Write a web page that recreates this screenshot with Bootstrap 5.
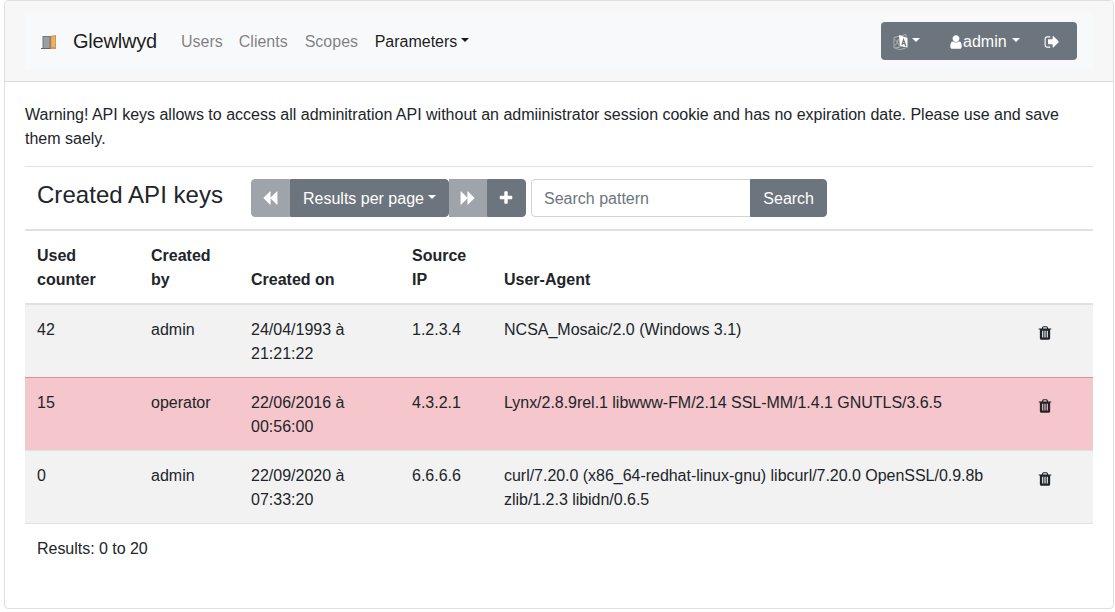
<!DOCTYPE html>
<html lang="en">
<head>
<meta charset="utf-8">
<meta name="viewport" content="width=device-width, initial-scale=1">
<title>Glewlwyd</title>
<link rel="stylesheet" href="https://cdn.jsdelivr.net/npm/bootstrap@5.3.0/dist/css/bootstrap.min.css">
<style>
body{font-family:"Liberation Sans",Arial,sans-serif;color:#212529;overflow:hidden}
.panel{margin-left:4px;width:1110px;height:609px;border:1px solid #dfdfdf;border-radius:4px}
.panel>.card-header{padding:12px 20px;background:#f7f7f7;border-bottom:1px solid #d9d9d9;height:81px}
.panel>.card-body{padding:21px 20px 20px}
.warn{margin-bottom:15px;letter-spacing:-.005px}
.topnav{background:#f8f9fa;height:56px;padding:8px 16px}
.topnav .navbar-brand{font-size:20px;margin-right:16px;color:rgba(0,0,0,.9);padding:4px 0;letter-spacing:-.2px}
.topnav .nav-link{padding:9px 8px 7px;color:rgba(0,0,0,.5)}
.topnav .nav-link.active{color:rgba(0,0,0,.9);margin-left:.6px}
.topnav .scopes{margin-left:1px}
.dropdown-toggle::after{margin-left:4.08px;vertical-align:5px;border-top-width:4.8px;border-left-width:4.8px;border-right-width:4.8px}
.door{width:16px;height:16px;margin-right:16px;position:relative;top:1px}
.btn{border-radius:4px;white-space:nowrap;padding:7px 12px 5px}
.btn-secondary{--bs-btn-bg:#6c757d;--bs-btn-border-color:#6c757d}
.ico{height:16px;width:16px;fill:currentColor;display:inline-block;vertical-align:-2px}
.tools{width:196px;height:38px;background:#6c757d;border-radius:4px;color:#fff}
.tools .btn{border:0;border-radius:0;color:#fff;padding:7px 0 5px;line-height:26px;height:38px}
.tools .dropdown-toggle::after{margin-bottom:4px}
.tools .lang-btn{margin-left:12px}
.tools .lang-btn::after{margin-left:3px}
.tools .user-btn{margin-left:28px}
.tools .user-btn span{margin-left:-1px}
.tools .user-btn::after{margin-left:5px}
.tools .out-btn{margin-left:24px}
.tools .out-btn .ico{vertical-align:-3px}
.keys{table-layout:fixed;width:1068px;border-collapse:collapse;margin:0}
.keys td,.keys th{padding:13px 12px 11px;vertical-align:top;border:0;border-top:1px solid #dee2e6;background:none;box-shadow:none;color:#212529}
.keys thead th{vertical-align:bottom;border-bottom:2px solid #dee2e6}
.keys thead td{border-bottom:2px solid #dee2e6;padding:12px}
.keys tbody .odd-row td{background:#f2f2f2}
.keys tbody .expired td{background:#f5c6cb;border-top-color:#dc8f96}
.keys h4{font-size:24px;line-height:28.8px;font-weight:500;margin:2px 0 0;letter-spacing:.04px}
.keys td.act{padding-left:17.4px;padding-top:17px;padding-bottom:0}
.keys .agent{letter-spacing:-.03px}
.pager .btn.btn{height:38px;flex:none;padding-left:0;padding-right:0;width:39px;margin-left:0!important}
.pager .btn.per-page{width:159px}
.pager .btn.forward{width:38px}
.pager .ico{position:relative;left:-.5px}
.forward .ico{transform:scaleX(-1)}
.btn.off{opacity:.65}
.search{width:296px;margin-left:5px}
.search .form-control{border-color:#ced4da;border-radius:4px;height:38px;padding:7px 12px 5px}
.search .form-control::placeholder{color:#6c757d}
</style>
</head>
<body>
<svg class="d-none">
<symbol id="back" viewBox="0 0 1792 1792"><path d="M1683 141q19-19 32-13t13 32v1472q0 26-13 32t-32-13L973 941q-9-9-13-19v710q0 26-13 32t-32-13L205 941q-19-19-19-45t19-45L915 141q19-19 32-13t13 32v710q4-10 13-19z"/></symbol>
<symbol id="plus" viewBox="0 0 1792 1792"><path d="M1600 736v192q0 40-28 68t-68 28h-416v416q0 40-28 68t-68 28H800q-40 0-68-28t-28-68v-416H288q-40 0-68-28t-28-68V736q0-40 28-68t68-28h416V224q0-40 28-68t68-28h192q40 0 68 28t28 68v416h416q40 0 68 28t28 68z"/></symbol>
<symbol id="trash" viewBox="0 0 1792 1792"><path d="M704 1376V672q0-14-9-23t-23-9h-64q-14 0-23 9t-9 23v704q0 14 9 23t23 9h64q14 0 23-9t9-23zm256 0V672q0-14-9-23t-23-9h-64q-14 0-23 9t-9 23v704q0 14 9 23t23 9h64q14 0 23-9t9-23zm256 0V672q0-14-9-23t-23-9h-64q-14 0-23 9t-9 23v704q0 14 9 23t23 9h64q14 0 23-9t9-23zM672 384h448l-48-117q-7-9-17-11H738q-10 2-17 11zm928 32v64q0 14-9 23t-23 9h-96v948q0 83-47 143.500t-113 60.500H480q-66 0-113-58.500T320 1464V512h-96q-14 0-23-9t-9-23v-64q0-14 9-23t23-9h309l70-167q15-37 54-63t79-26h320q40 0 79 26t54 63l70 167h309q14 0 23 9t9 23z"/></symbol>
<symbol id="user" viewBox="0 0 1792 1792"><path d="M1536 1399q0 109-62.500 187t-150.500 78H469q-88 0-150.500-78T256 1399q0-85 8.500-160.500t31.500-152 58.500-131 94-89T583 832q131 128 313 128t313-128q76 0 134.500 34.500t94 89 58.500 131 31.500 152 8.500 160.500zm-256-887q0 159-112.500 271.500T896 896 624.500 783.500 512 512t112.500-271.500T896 128t271.500 112.500T1280 512z"/></symbol>
<symbol id="out" viewBox="0 0 1792 1792"><path d="M704 1440q0 4 1 20t.5 26.500-3 23.500-10 19.500-20.500 6.500H352q-119 0-203.500-84.500T64 1248V544q0-119 84.500-203.500T352 256h320q13 0 22.500 9.500T704 288q0 4 1 20t.5 26.500-3 23.500-10 19.500T672 384H352q-66 0-113 47t-47 113v704q0 66 47 113t113 47h312l11.500 1 11.500 3 8 5.500 7 9 2 13.500zm928-544q0 26-19 45l-544 544q-19 19-45 19t-45-19-19-45v-288H512q-26 0-45-19t-19-45V640q0-26 19-45t45-19h448V288q0-26 19-45t45-19 45 19l544 544q19 19 19 45z"/></symbol>
</svg>
<div class="card panel">
  <div class="card-header">
    <nav class="navbar navbar-expand topnav">
      <svg class="door" viewBox="0 0 16 16"><path d="M0 14.500h10" stroke="#666" stroke-width="1"/><path d="M1.500 2h8v12h-8z" fill="#777"/><path d="M2.500 3h6v11h-6z" fill="#999fa3"/><path d="M9 2l6-1v14H9z" fill="#cf9656"/><path d="M10.500 3l3.500-.7v10.700h-3.500z" fill="#e2b275"/><path d="M9 2h1v13H9z" fill="#b97a40"/><circle cx="13.300" cy="8.500" r=".9" fill="#f5c21b"/></svg>
      <a class="navbar-brand" href="#">Glewlwyd</a>
      <div class="navbar-nav">
        <a class="nav-link" href="#">Users</a><a class="nav-link" href="#">Clients</a><a class="nav-link scopes" href="#">Scopes</a><a class="nav-link active dropdown-toggle" href="#">Parameters</a>
      </div>
      <div class="tools d-flex align-items-center ms-auto">
        <a class="btn d-flex align-items-center dropdown-toggle lang-btn" href="#"><svg class="ico" viewBox="0 0 16 16"><g fill="none" stroke="#b5b9ae" stroke-width=".9"><path d="M1 3.500l6-1.500v11L1 14zM7 2l6-1.500V4M2.500 14.500q5 2.500 10-.5M2.500 5.500l3.500 6M5.500 5q-.5 4-3.500 6.500"/></g><path d="M6 1l8.500 3v9.500L7 12z" fill="#fff"/><path d="M9 11l1.600-5.200 2.200 6.500M9.500 9.200l2.600.8" fill="none" stroke="#6c757d" stroke-width="1.200"/></svg></a>
        <a class="btn d-flex align-items-center dropdown-toggle user-btn" href="#"><svg class="ico" viewBox="0 0 1792 1792"><use href="#user"/></svg><span>admin</span></a>
        <a class="btn out-btn" href="#"><svg class="ico"><use href="#out"/></svg></a>
      </div>
    </nav>
  </div>
  <div class="card-body">
    <p class="warn">Warning! API keys allows to access all adminitration API without an admiinistrator session cookie and has no expiration date. Please use and save them saely.</p>
    <table class="table keys">
      <colgroup><col width="114"><col width="100"><col width="161"><col width="92"><col width="528"><col width="73"></colgroup>
      <thead>
        <tr><td colspan="2"><h4>Created API keys</h4></td>
          <td colspan="4"><div class="d-flex">
            <div class="btn-group pager">
              <button class="btn btn-secondary off"><svg class="ico"><use href="#back"/></svg></button>
              <button class="btn btn-secondary dropdown-toggle per-page">Results per page</button>
              <button class="btn btn-secondary off forward"><svg class="ico"><use href="#back"/></svg></button>
              <button class="btn btn-secondary"><svg class="ico"><use href="#plus"/></svg></button>
            </div>
            <div class="input-group search"><input class="form-control" placeholder="Search pattern"><button class="btn btn-secondary">Search</button></div>
          </div></td></tr>
        <tr class="heads"><th>Used counter</th><th>Created by</th><th>Created on</th><th>Source IP</th><th>User-Agent</th><th></th></tr>
      </thead>
      <tbody>
        <tr class="odd-row"><td>42</td><td>admin</td><td>24/04/1993 à 21:21:22</td><td>1.2.3.4</td><td>NCSA_Mosaic/2.0 (Windows 3.1)</td><td class="act"><svg class="ico"><use href="#trash"/></svg></td></tr>
        <tr class="expired"><td>15</td><td>operator</td><td>22/06/2016 à 00:56:00</td><td>4.3.2.1</td><td class="agent">Lynx/2.8.9rel.1 libwww-FM/2.14 SSL-MM/1.4.1 GNUTLS/3.6.5</td><td class="act"><svg class="ico"><use href="#trash"/></svg></td></tr>
        <tr class="odd-row"><td>0</td><td>admin</td><td>22/09/2020 à 07:33:20</td><td>6.6.6.6</td><td class="agent">curl/7.20.0 (x86_64-redhat-linux-gnu) libcurl/7.20.0 OpenSSL/0.9.8b zlib/1.2.3 libidn/0.6.5</td><td class="act"><svg class="ico"><use href="#trash"/></svg></td></tr>
        <tr><td colspan="6" class="agent">Results: 0 to 20</td></tr>
      </tbody>
    </table>
  </div>
</div>
<script src="https://cdn.jsdelivr.net/npm/bootstrap@5.3.0/dist/js/bootstrap.bundle.min.js"></script>
</body>
</html>
